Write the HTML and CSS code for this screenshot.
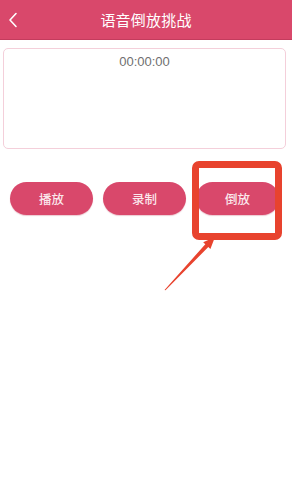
FILE: index.html
```html
<!DOCTYPE html>
<html lang="zh">
<head>
<meta charset="utf-8">
<link rel="stylesheet" href="styles.css">
</head>
<body>
<div class="app">
  <header class="bar">
    <svg class="back" width="10" height="16" viewBox="0 0 10 16"><path d="M8 1.5 L2 8 L8 14.5" fill="none" stroke="#fff" stroke-width="1.6" stroke-linecap="round" stroke-linejoin="round"/></svg>
    <h1 class="title">语音倒放挑战</h1>
  </header>
  <section class="panel">
    <div class="timer">00:00:00</div>
  </section>
  <div class="actions">
    <button class="btn">播放</button>
    <button class="btn">录制</button>
    <button class="btn">倒放</button>
  </div>
  <div class="mark"></div>
  <svg class="arrow" width="292" height="482" viewBox="0 0 292 482">
    <polygon points="215,237 203.2,242.3 205.3,244.3 164.5,290 165.5,290.3 208.3,247.1 210.4,249.1" fill="#e8432e"/>
  </svg>
</div>
</body>
</html>
```
FILE: styles.css
```css
* { box-sizing: border-box; }
html, body { margin: 0; padding: 0; background: #fff; }
body { font-family: "Noto Sans CJK SC", "Noto Sans", sans-serif; }
.app { position: relative; width: 292px; height: 482px; overflow: hidden; background: #fff; }
.bar {
  position: relative;
  height: 40px;
  background: #d9486b;
  border-bottom: 1px solid #c33c5d;
  display: flex;
  align-items: center;
  justify-content: center;
}
.back { position: absolute; left: 8px; top: 12px; }
.title {
  margin: 0;
  font-size: 15px;
  font-weight: 400;
  color: #fff;
  letter-spacing: 0.2px;
}
.panel {
  margin: 8px 6px 0 3px;
  height: 101px;
  border: 1px solid #f4cfda;
  border-radius: 5px;
  display: flex;
  justify-content: center;
}
.timer {
  margin-top: 5px;
  font-family: "Liberation Sans", Arial, sans-serif;
  font-size: 13px;
  color: #6f6f6f;
  line-height: 16px;
}
.actions {
  margin-top: 33px;
  padding: 0 13px 0 10px;
  display: flex;
  justify-content: space-between;
}
.btn {
  width: 83px;
  height: 33px;
  border: none;
  border-radius: 17px;
  background: #d9486b;
  color: #fbe7ec;
  font-family: "Noto Sans CJK SC", sans-serif;
  font-size: 12.5px;
  font-weight: 500;
  padding: 0;
  box-shadow: 0 1px 1px rgba(180, 40, 70, 0.25);
}
.mark {
  position: absolute;
  left: 192px;
  top: 161px;
  width: 90px;
  height: 79px;
  border: 7px solid #e8432e;
  border-radius: 7px;
}
.arrow { position: absolute; left: 0; top: 0; }
```
